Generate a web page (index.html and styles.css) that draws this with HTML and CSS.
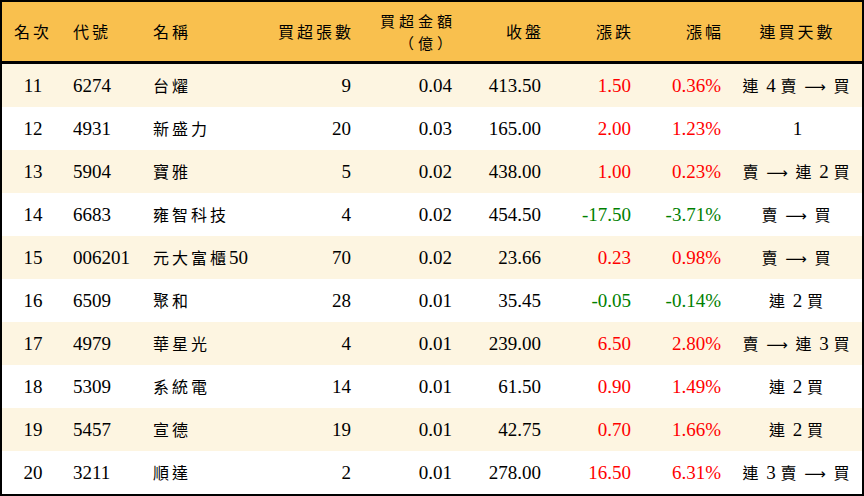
FILE: index.html
```html
<!DOCTYPE html>
<html lang="zh-Hant">
<head>
<meta charset="utf-8">
<title>買超排行</title>
<link rel="stylesheet" href="styles.css">
</head>
<body>
<div class="frame">
<table class="rank">
<colgroup>
<col class="w1"><col class="w2"><col class="w3"><col class="w4"><col class="w5"><col class="w6"><col class="w7"><col class="w8"><col class="w9">
</colgroup>
<thead>
<tr>
<th class="ctr"><span class="zh">名次</span></th>
<th class="lft"><span class="zh">代號</span></th>
<th class="lft"><span class="zh">名稱</span></th>
<th class="rgt"><span class="zh">買超張數</span></th>
<th class="rgt two"><span class="zh line">買超金額</span><span class="zh line">（億）</span></th>
<th class="rgt"><span class="zh">收盤</span></th>
<th class="rgt"><span class="zh">漲跌</span></th>
<th class="rgt"><span class="zh">漲幅</span></th>
<th class="ctr last"><span class="zh">連買天數</span></th>
</tr>
</thead>
<tbody>
<tr class="odd"><td class="ctr">11</td><td class="lft">6274</td><td class="lft"><span class="zh">台燿</span></td><td class="rgt">9</td><td class="rgt">0.04</td><td class="rgt">413.50</td><td class="rgt up">1.50</td><td class="rgt up">0.36%</td><td class="ctr last"><span class="zh">連</span> 4 <span class="zh">賣</span> <span class="arr">⟶</span> <span class="zh">買</span></td></tr>
<tr><td class="ctr">12</td><td class="lft">4931</td><td class="lft"><span class="zh">新盛力</span></td><td class="rgt">20</td><td class="rgt">0.03</td><td class="rgt">165.00</td><td class="rgt up">2.00</td><td class="rgt up">1.23%</td><td class="ctr last">1</td></tr>
<tr class="odd"><td class="ctr">13</td><td class="lft">5904</td><td class="lft"><span class="zh">寶雅</span></td><td class="rgt">5</td><td class="rgt">0.02</td><td class="rgt">438.00</td><td class="rgt up">1.00</td><td class="rgt up">0.23%</td><td class="ctr last"><span class="zh">賣</span> <span class="arr">⟶</span> <span class="zh">連</span> 2 <span class="zh">買</span></td></tr>
<tr><td class="ctr">14</td><td class="lft">6683</td><td class="lft"><span class="zh">雍智科技</span></td><td class="rgt">4</td><td class="rgt">0.02</td><td class="rgt">454.50</td><td class="rgt dn">-17.50</td><td class="rgt dn">-3.71%</td><td class="ctr last"><span class="zh">賣</span> <span class="arr">⟶</span> <span class="zh">買</span></td></tr>
<tr class="odd"><td class="ctr">15</td><td class="lft">006201</td><td class="lft"><span class="zh">元大富櫃</span>50</td><td class="rgt">70</td><td class="rgt">0.02</td><td class="rgt">23.66</td><td class="rgt up">0.23</td><td class="rgt up">0.98%</td><td class="ctr last"><span class="zh">賣</span> <span class="arr">⟶</span> <span class="zh">買</span></td></tr>
<tr><td class="ctr">16</td><td class="lft">6509</td><td class="lft"><span class="zh">聚和</span></td><td class="rgt">28</td><td class="rgt">0.01</td><td class="rgt">35.45</td><td class="rgt dn">-0.05</td><td class="rgt dn">-0.14%</td><td class="ctr last"><span class="zh">連</span> 2 <span class="zh">買</span></td></tr>
<tr class="odd"><td class="ctr">17</td><td class="lft">4979</td><td class="lft"><span class="zh">華星光</span></td><td class="rgt">4</td><td class="rgt">0.01</td><td class="rgt">239.00</td><td class="rgt up">6.50</td><td class="rgt up">2.80%</td><td class="ctr last"><span class="zh">賣</span> <span class="arr">⟶</span> <span class="zh">連</span> 3 <span class="zh">買</span></td></tr>
<tr><td class="ctr">18</td><td class="lft">5309</td><td class="lft"><span class="zh">系統電</span></td><td class="rgt">14</td><td class="rgt">0.01</td><td class="rgt">61.50</td><td class="rgt up">0.90</td><td class="rgt up">1.49%</td><td class="ctr last"><span class="zh">連</span> 2 <span class="zh">買</span></td></tr>
<tr class="odd"><td class="ctr">19</td><td class="lft">5457</td><td class="lft"><span class="zh">宣德</span></td><td class="rgt">19</td><td class="rgt">0.01</td><td class="rgt">42.75</td><td class="rgt up">0.70</td><td class="rgt up">1.66%</td><td class="ctr last"><span class="zh">連</span> 2 <span class="zh">買</span></td></tr>
<tr><td class="ctr">20</td><td class="lft">3211</td><td class="lft"><span class="zh">順達</span></td><td class="rgt">2</td><td class="rgt">0.01</td><td class="rgt">278.00</td><td class="rgt up">16.50</td><td class="rgt up">6.31%</td><td class="ctr last"><span class="zh">連</span> 3 <span class="zh">賣</span> <span class="arr">⟶</span> <span class="zh">買</span></td></tr>
</tbody>
</table>
</div>
</body>
</html>
```

FILE: styles.css
```css
html, body {
  margin: 0;
  padding: 0;
  background: #ffffff;
}

.frame {
  width: 860px;
  height: 492px;
  border: 2px solid #000000;
  overflow: hidden;
}

.rank {
  width: 860px;
  border-collapse: collapse;
  table-layout: fixed;
  font-family: "Liberation Serif", "Noto Sans CJK TC", serif;
  font-size: 19px;
  color: #000000;
}

.w1 { width: 62px; }
.w2 { width: 80px; }
.w3 { width: 126px; }
.w4 { width: 81px; }
.w5 { width: 101px; }
.w6 { width: 89px; }
.w7 { width: 90px; }
.w8 { width: 90px; }
.w9 { width: 141px; }

.zh {
  font-family: "Noto Sans CJK TC", sans-serif;
  font-size: 16px;
  letter-spacing: 3px;
}

.arr {
  font-family: "DejaVu Sans", sans-serif;
  font-size: 15px;
  letter-spacing: 0;
  margin-right: 3px;
}

.rank th {
  height: 59px;
  padding: 0;
  background: #f9c04e;
  border-bottom: 3px solid #000000;
  font-weight: normal;
  line-height: 19px;
  white-space: nowrap;
}

.rank th.rgt .zh {
  margin-right: -3px;
}

.rank th .line {
  display: block;
  height: 22px;
  line-height: 22px;
  font-size: 15px;
  letter-spacing: 4px;
}

.rank th.rgt .line {
  margin-right: -4px;
}

.rank td {
  height: 43px;
  padding: 0;
  line-height: 20px;
  white-space: nowrap;
}

.rank tr.odd td {
  background: #fdf5e1;
}

.ctr { text-align: center; }
.lft { text-align: left; }
.rgt { text-align: right; }

.rank .lft {
  padding-left: 9px;
}

.rank .last {
  padding-left: 12px;
}

.up { color: #ff0000; }
.dn { color: #008000; }
```
